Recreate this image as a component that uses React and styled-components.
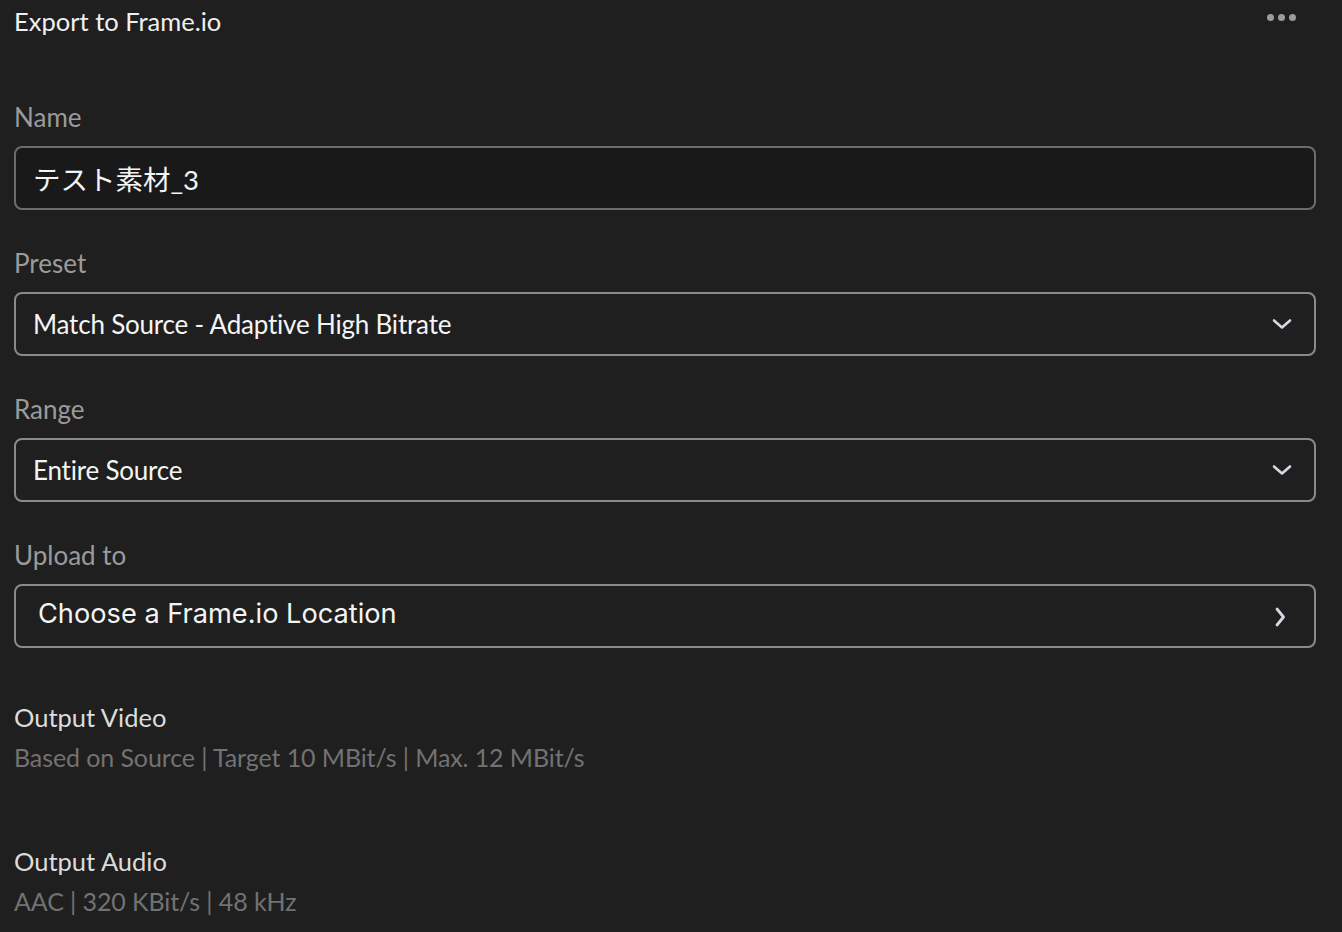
import React from "react";
import styled, { createGlobalStyle } from "styled-components";

const GlobalStyle = createGlobalStyle`
  html, body {
    margin: 0;
    padding: 0;
    background: #1f1f1f;
  }
  body {
    font-family: "Lato", "Noto Sans CJK JP", sans-serif;
  }
`;

const Page = styled.div`
  width: 1342px;
  height: 932px;
  box-sizing: border-box;
  padding: 5px 26px 0 14px;
  background: #1f1f1f;
  overflow: hidden;
  display: flex;
  flex-direction: column;
`;

const Header = styled.div`
  display: flex;
  align-items: flex-start;
  justify-content: space-between;
  height: 32px;
  margin-bottom: 64px;
`;

const Title = styled.div`
  font-size: 25.5px;
  line-height: 32px;
  color: #f0f0f0;
`;

const MoreButton = styled.div`
  display: flex;
  gap: 4px;
  margin-top: 9px;
  margin-right: 20px;
`;

const Dot = styled.span`
  width: 7px;
  height: 7px;
  border-radius: 50%;
  background: #9c9c9c;
`;

const Fields = styled.div`
  display: flex;
  flex-direction: column;
  gap: 37px;
`;

const Field = styled.div`
  display: flex;
  flex-direction: column;
  gap: 13px;
`;

const Label = styled.div`
  font-size: 26px;
  line-height: 32px;
  color: #9b9b9b;
`;

const Box = styled.div`
  height: 64px;
  box-sizing: border-box;
  border: 2px solid ${({ $dim }) => ($dim ? "#6c6c6c" : "#8a8a8a")};
  border-radius: 8px;
  background: ${({ $dark }) => ($dark ? "#19191a" : "#1f1f1f")};
  display: flex;
  align-items: center;
  justify-content: space-between;
  padding: 0 22px 0 ${({ $inset }) => $inset || 17}px;
`;

const Value = styled.span`
  font-size: 26px;
  letter-spacing: -0.2px;
  color: #f4f4f4;
  font-family: "Lato", "Noto Sans CJK JP", sans-serif;
`;

const NameValue = styled(Value)`
  font-size: 27.5px;
  letter-spacing: 0;
`;

const LocationValue = styled(Value)`
  font-family: "Inter", "Noto Sans", sans-serif;
  font-size: 27.2px;
  letter-spacing: 0;
  margin-bottom: 5px;
`;

const Output = styled.div`
  display: flex;
  flex-direction: column;
  margin-top: ${({ $first }) => ($first ? "53px" : "70px")};
`;

const OutputTitle = styled.div`
  font-size: 25.5px;
  line-height: 32px;
  color: #dcdcdc;
`;

const OutputInfo = styled.div`
  font-size: 25px;
  line-height: 36px;
  letter-spacing: -0.1px;
  margin-top: 6px;
  color: #727272;
`;

const ChevronDown = () => (
  <svg width="20" height="20" viewBox="0 0 20 20" fill="none">
    <path d="M2 6.5l8 7 8-7" stroke="#d8d8e4" strokeWidth="2.6" strokeLinecap="round" strokeLinejoin="round" />
  </svg>
);

const ChevronRight = () => (
  <svg width="20" height="22" viewBox="0 0 20 22" fill="none" style={{ marginRight: "1px", marginTop: "2px" }}>
    <path d="M6 3l6.5 8-6.5 8" stroke="#d8d8e4" strokeWidth="2.8" strokeLinecap="round" strokeLinejoin="round" />
  </svg>
);

export default function App() {
  return (
    <>
      <GlobalStyle />
      <Page>
        <Header>
          <Title>Export to Frame.io</Title>
          <MoreButton>
            <Dot />
            <Dot />
            <Dot />
          </MoreButton>
        </Header>
        <Fields>
          <Field>
            <Label>Name</Label>
            <Box $dim $dark>
              <NameValue>テスト素材_3</NameValue>
            </Box>
          </Field>
          <Field>
            <Label>Preset</Label>
            <Box>
              <Value>Match Source - Adaptive High Bitrate</Value>
              <ChevronDown />
            </Box>
          </Field>
          <Field>
            <Label>Range</Label>
            <Box>
              <Value>Entire Source</Value>
              <ChevronDown />
            </Box>
          </Field>
          <Field>
            <Label>Upload to</Label>
            <Box $inset={22}>
              <LocationValue>Choose a Frame.io Location</LocationValue>
              <ChevronRight />
            </Box>
          </Field>
        </Fields>
        <Output $first>
          <OutputTitle>Output Video</OutputTitle>
          <OutputInfo>Based on Source | Target 10 MBit/s | Max. 12 MBit/s</OutputInfo>
        </Output>
        <Output>
          <OutputTitle>Output Audio</OutputTitle>
          <OutputInfo>AAC | 320 KBit/s | 48 kHz</OutputInfo>
        </Output>
      </Page>
    </>
  );
}
